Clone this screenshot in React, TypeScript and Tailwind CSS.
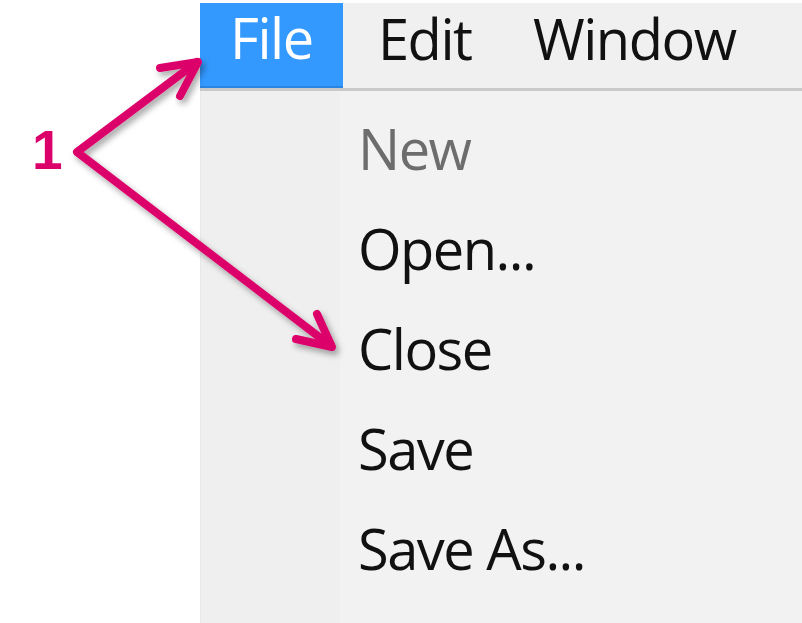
import React from "react"

const menuBar = [
  { label: "File", active: true, width: "w-[143px]", pad: "pl-[30px]" },
  { label: "Edit", active: false, width: "w-[155px]", pad: "pl-[35px]" },
  { label: "Window", active: false, width: "w-[230px]", pad: "pl-[35px]" },
]

const items = [
  { label: "New", disabled: true },
  { label: "Open...", disabled: false },
  { label: "Close", disabled: false },
  { label: "Save", disabled: false },
  { label: "Save As...", disabled: false },
]

function Arrows() {
  return (
    <svg className="absolute left-0 top-0 pointer-events-none" width="802" height="623" viewBox="0 0 802 623">
      <defs>
        <filter id="shadow" x="-20%" y="-20%" width="140%" height="140%">
          <feDropShadow dx="3" dy="4" stdDeviation="3" floodColor="#000" floodOpacity="0.35" />
        </filter>
      </defs>
      <g
        filter="url(#shadow)"
        stroke="#dc006b"
        strokeWidth="8"
        strokeLinecap="round"
        strokeLinejoin="round"
        fill="none"
      >
        <polyline points="197,62 77,152 331,346" />
        <polyline points="160,68 198,62 180,96" />
        <polyline points="296,339 332,347 317,314" />
      </g>
    </svg>
  )
}

export default function App() {
  return (
    <div
      className="relative w-[802px] h-[623px] bg-white flex overflow-hidden"
      style={{ fontFamily: "'Open Sans', 'Noto Sans', sans-serif" }}
    >
      {/* callout number */}
      <div className="w-[200px] shrink-0 relative">
        <span
          className="absolute left-[32px] top-[123px] text-[55px] font-bold text-[#dc006b] leading-none"
          style={{ fontFamily: "'Liberation Sans', Arial, sans-serif" }}
        >
          1
        </span>
      </div>

      {/* window */}
      <div className="flex-1 mt-[3px] flex flex-col bg-[#f2f2f2]">
        <div className="h-[85px] flex bg-[#f0f0f0]">
          {menuBar.map((m) => (
            <div
              key={m.label}
              className={`${m.width} ${m.pad} pb-[15px] shrink-0 flex items-center text-[56px] tracking-[-1.5px] ${
                m.active ? "bg-[#3399ff] text-white border-b-2 border-[#2a85e0]" : "text-[#111]"
              }`}
            >
              {m.label}
            </div>
          ))}
        </div>
        <div className="h-[3px] bg-[#c9c9c9]" />
        <div className="flex-1 flex">
          <div className="w-[140px] shrink-0 bg-[#efefef] border-l border-[#e8e8e8]" />
          <div className="flex-1 pt-[7px] pl-[18px]">
            {items.map((it) => (
              <div
                key={it.label}
                className={`h-[100px] leading-[100px] text-[56px] tracking-[-1.5px] ${
                  it.disabled ? "text-[#6d6d6d]" : "text-[#111]"
                }`}
              >
                {it.label}
              </div>
            ))}
          </div>
        </div>
      </div>

      <Arrows />
    </div>
  )
}
